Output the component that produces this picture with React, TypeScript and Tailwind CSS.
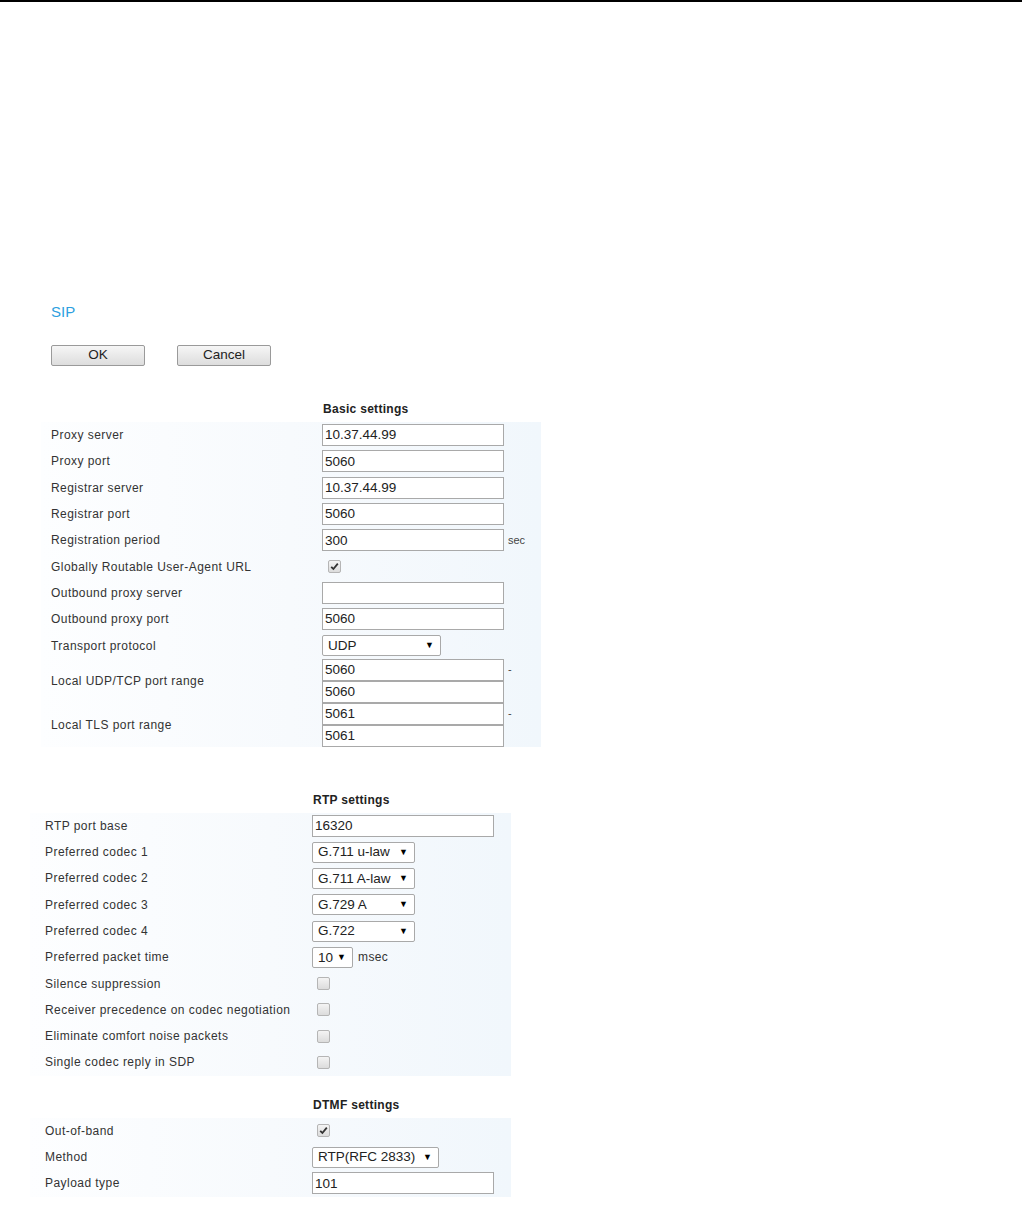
import React from "react";

const font = { fontFamily: '"Liberation Sans", Arial, sans-serif' };

function TextBox({ value, w = "w-[182px]" }: { value: string; w?: string }) {
  return (
    <div className={`${w} h-[22px] border border-[#a9a9a9] bg-white flex items-center pl-[2px] text-[13.5px] text-[#222] leading-none`}>
      {value}
    </div>
  );
}

function Select({ value, w }: { value: string; w: string }) {
  return (
    <div className={`${w} h-[21px] border border-[#a9a9a9] rounded-[2px] bg-white flex items-center justify-between pl-[5px] pr-[6px] text-[13.5px] text-[#222] leading-none`}>
      <span>{value}</span>
      <span className="text-[9px] text-black">▼</span>
    </div>
  );
}

function Check({ checked }: { checked?: boolean }) {
  return (
    <div className="w-[13px] h-[13px] rounded-[2px] border border-[#b5b5b5] bg-linear-to-b from-[#f4f4f4] to-[#dcdcdc] flex items-center justify-center">
      {checked && (
        <svg width="9" height="9" viewBox="0 0 9 9">
          <path d="M1.2 4.8 L3.4 7 L7.8 1.6" stroke="#333" strokeWidth="1.8" fill="none" />
        </svg>
      )}
    </div>
  );
}

function Row({ label, children, labelW, pad, h = "h-[26.3px]" }: { label: string; children?: React.ReactNode; labelW: string; pad: string; h?: string }) {
  return (
    <div className={`flex items-center ${h} bg-linear-to-r from-[#fdfeff] via-[#f7fafd] to-[#f1f7fc]`}>
      <div className={`${labelW} ${pad} shrink-0 text-[12px] tracking-[0.45px] text-[#333]`}>{label}</div>
      <div className="flex items-center">{children}</div>
    </div>
  );
}

function Header({ title, labelW }: { title: string; labelW: string }) {
  return (
    <div className="flex items-center h-[26px]">
      <div className={`${labelW} shrink-0`} />
      <div className="pl-[1px] text-[12px] tracking-[0.3px] font-bold text-[#222]">{title}</div>
    </div>
  );
}

function Range({ a, b }: { a: string; b: string }) {
  return (
    <div className="flex flex-col">
      <div className="flex items-center">
        <TextBox value={a} />
        <span className="ml-[4px] text-[11px] text-[#444]">-</span>
      </div>
      <TextBox value={b} />
    </div>
  );
}

export default function App() {
  const bW = "w-[281px]";
  const bP = "pl-[10px]";
  const rW = "w-[282px]";
  const rP = "pl-[15px]";
  return (
    <div style={font} className="w-[1022px] h-[1206px] bg-white">
      <div className="h-[2px] bg-black" />
      <div className="pl-[51px] pt-[300px]">
        <div className="text-[15px] text-[#2d9fe0] leading-[20px]">SIP</div>
        <div className="flex gap-[32px] mt-[23px]">
          <div className="w-[94px] h-[21px] border border-[#9a9a9a] rounded-[2px] bg-linear-to-b from-[#f6f6f6] to-[#dddddd] flex items-center justify-center text-[13.5px] text-[#222]">OK</div>
          <div className="w-[94px] h-[21px] border border-[#9a9a9a] rounded-[2px] bg-linear-to-b from-[#f6f6f6] to-[#dddddd] flex items-center justify-center text-[13.5px] text-[#222]">Cancel</div>
        </div>
      </div>

      <div className="ml-[41px] w-[500px] mt-[30px]">
        <Header title="Basic settings" labelW={bW} />
        <Row label="Proxy server" labelW={bW} pad={bP}><TextBox value="10.37.44.99" /></Row>
        <Row label="Proxy port" labelW={bW} pad={bP}><TextBox value="5060" /></Row>
        <Row label="Registrar server" labelW={bW} pad={bP}><TextBox value="10.37.44.99" /></Row>
        <Row label="Registrar port" labelW={bW} pad={bP}><TextBox value="5060" /></Row>
        <Row label="Registration period" labelW={bW} pad={bP}>
          <TextBox value="300" />
          <span className="ml-[4px] text-[11px] text-[#444]">sec</span>
        </Row>
        <Row label="Globally Routable User-Agent URL" labelW={bW} pad={bP}>
          <div className="pl-[6px]"><Check checked /></div>
        </Row>
        <Row label="Outbound proxy server" labelW={bW} pad={bP}><TextBox value="" /></Row>
        <Row label="Outbound proxy port" labelW={bW} pad={bP}><TextBox value="5060" /></Row>
        <Row label="Transport protocol" labelW={bW} pad={bP}><Select value="UDP" w="w-[119px]" /></Row>
        <Row label="Local UDP/TCP port range" labelW={bW} pad={bP} h="h-[44px]">
          <Range a="5060" b="5060" />
        </Row>
        <Row label="Local TLS port range" labelW={bW} pad={bP} h="h-[44px]">
          <Range a="5061" b="5061" />
        </Row>
      </div>

      <div className="ml-[30px] w-[481px] mt-[40px]">
        <Header title="RTP settings" labelW={rW} />
        <Row label="RTP port base" labelW={rW} pad={rP}><TextBox value="16320" /></Row>
        <Row label="Preferred codec 1" labelW={rW} pad={rP}><Select value="G.711 u-law" w="w-[103px]" /></Row>
        <Row label="Preferred codec 2" labelW={rW} pad={rP}><Select value="G.711 A-law" w="w-[103px]" /></Row>
        <Row label="Preferred codec 3" labelW={rW} pad={rP}><Select value="G.729 A" w="w-[103px]" /></Row>
        <Row label="Preferred codec 4" labelW={rW} pad={rP}><Select value="G.722" w="w-[103px]" /></Row>
        <Row label="Preferred packet time" labelW={rW} pad={rP}>
          <Select value="10" w="w-[41px]" />
          <span className="ml-[5px] text-[12px] tracking-[0.4px] text-[#333]">msec</span>
        </Row>
        <Row label="Silence suppression" labelW={rW} pad={rP}><div className="pl-[5px]"><Check /></div></Row>
        <Row label="Receiver precedence on codec negotiation" labelW={rW} pad={rP}><div className="pl-[5px]"><Check /></div></Row>
        <Row label="Eliminate comfort noise packets" labelW={rW} pad={rP}><div className="pl-[5px]"><Check /></div></Row>
        <Row label="Single codec reply in SDP" labelW={rW} pad={rP}><div className="pl-[5px]"><Check /></div></Row>
      </div>

      <div className="ml-[30px] w-[481px] mt-[16px]">
        <Header title="DTMF settings" labelW={rW} />
        <Row label="Out-of-band" labelW={rW} pad={rP}><div className="pl-[5px]"><Check checked /></div></Row>
        <Row label="Method" labelW={rW} pad={rP}><Select value="RTP(RFC 2833)" w="w-[127px]" /></Row>
        <Row label="Payload type" labelW={rW} pad={rP}><TextBox value="101" /></Row>
      </div>
    </div>
  );
}
